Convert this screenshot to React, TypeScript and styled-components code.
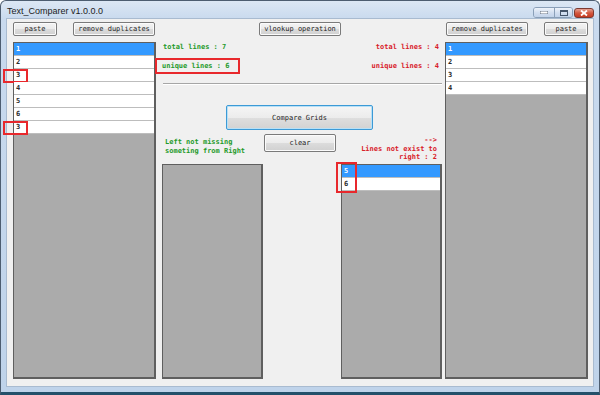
import styled, { createGlobalStyle } from "styled-components";

const GlobalStyle = createGlobalStyle`
  html, body {
    margin: 0;
    padding: 0;
    background: #ffffff;
  }
  * {
    box-sizing: border-box;
  }
`;

const Window = styled.div`
  width: 600px;
  height: 395px;
  display: flex;
  flex-direction: column;
  border: 1px solid #4d5d70;
  border-bottom: 3px solid #24506a;
  border-radius: 6px 6px 0 0;
  background: linear-gradient(to bottom, #dce7f4 0px, #c9daee 18px, #bfd3ea 100%);
  overflow: hidden;
`;

const TitleBar = styled.div`
  height: 17px;
  display: flex;
  align-items: center;
  justify-content: space-between;
  padding: 0 5px 0 6px;
`;

const Title = styled.span`
  font-family: "Liberation Sans", "Noto Sans", sans-serif;
  font-size: 9px;
  color: #1c1c1c;
  padding-top: 2px;
`;

const Caption = styled.div`
  display: flex;
  align-items: center;
  margin-top: 6px;
  height: 10px;
`;

const CaptionGroup = styled.div`
  display: flex;
  border: 1px solid #8a9fb8;
  border-radius: 3px;
  overflow: hidden;
  margin-right: 1px;
`;

const CaptionButton = styled.div<{ $w: number; $close?: boolean }>`
  width: ${(p) => p.$w}px;
  height: 9px;
  display: flex;
  align-items: center;
  justify-content: center;
  background: ${(p) =>
    p.$close
      ? "linear-gradient(to bottom, #e6a193 0%, #d3583f 50%, #c53a22 100%)"
      : "linear-gradient(to bottom, #eef3fa 0%, #d3dff0 50%, #c2d3ea 100%)"};
  & + & {
    border-left: 1px solid #8a9fb8;
  }
`;

const CloseButton = styled(CaptionButton)`
  border: 1px solid #7d3a30;
  border-radius: 3px;
  height: 10px;
`;

const Client = styled.div`
  flex: 1;
  margin: 0 5px 5px 5px;
  border: 1px solid #a9bbd0;
  background: #f0f0f0;
  padding: 3px 5px 7px 6px;
  display: grid;
  grid-template-columns: 143px 1fr 143px;
  grid-template-rows: 14px 1fr;
  row-gap: 6px;
  font-family: "DejaVu Sans Mono", "Liberation Mono", monospace;
  font-size: 7px;
`;

const ButtonBar = styled.div<{ $pad?: number }>`
  display: flex;
  gap: 16px;
  padding-left: ${(p) => p.$pad || 0}px;
`;

const Button = styled.button<{ $w: number; $h?: number }>`
  width: ${(p) => p.$w}px;
  height: ${(p) => p.$h || 14}px;
  padding: 0;
  border: 1px solid #7a7a7a;
  border-radius: 2px;
  background: linear-gradient(to bottom, #f4f4f4 0%, #ebebeb 50%, #dcdcdc 51%, #d0d0d0 100%);
  font-family: "DejaVu Sans Mono", "Liberation Mono", monospace;
  font-size: 7px;
  color: #1e1e1e;
  box-shadow: inset 0 0 0 1px #fbfbfb;
  cursor: default;
`;

const FocusButton = styled(Button)`
  border: 1px solid #3c9ad6;
  box-shadow: inset 0 0 0 1px #b8e0f6;
  background: linear-gradient(to bottom, #f5f5f5 0%, #ececec 50%, #dedede 51%, #d2d2d2 100%);
`;

const Grid = styled.div`
  background: #ababab;
  border: 1px solid #5f5f5f;
  border-right-width: 2px;
  border-bottom-width: 2px;
  display: flex;
  flex-direction: column;
  min-height: 0;
`;

const Row = styled.div<{ $selected?: boolean }>`
  position: relative;
  height: 13px;
  flex: none;
  display: flex;
  align-items: center;
  padding-left: 2px;
  font-weight: bold;
  font-size: 7px;
  background: ${(p) => (p.$selected ? "#3399ff" : "#ffffff")};
  color: ${(p) => (p.$selected ? "#ffffff" : "#2a2a2a")};
  border-bottom: 1px solid #bdbdbd;
`;

// red annotation boxes drawn over the grid rows
const RowMark = styled.span`
  position: absolute;
  left: -11px;
  top: 0;
  width: 25px;
  height: 14px;
  border: 2px solid #e8282c;
`;

const PairMark = styled.span`
  position: absolute;
  left: -6px;
  top: -3px;
  width: 21px;
  height: 31px;
  border: 2px solid #e8282c;
  z-index: 1;
`;

const RowStack = styled.div`
  position: relative;
  display: flex;
  flex-direction: column;
`;

const Center = styled.div`
  display: flex;
  flex-direction: column;
  padding: 0 3px 0 6px;
  min-height: 0;
`;

const StatRow = styled.div<{ $top: number }>`
  display: flex;
  justify-content: space-between;
  align-items: center;
  margin-top: ${(p) => p.$top}px;
  padding: 0 3px 0 1px;
  height: ${(p) => (p.$top ? 16 : 10)}px;
`;

const Stat = styled.span<{ $tone: "green" | "red" }>`
  font-weight: bold;
  font-size: 7px;
  line-height: 10px;
  color: ${(p) => (p.$tone === "green" ? "#1f9a2a" : "#d8202a")};
  white-space: pre;
`;

const BoxedStat = styled(Stat)`
  display: inline-block;
  border: 2px solid #e8282c;
  margin-left: -8px;
  padding: 1px 9px 1px 5px;
`;

const Divider = styled.div`
  height: 1px;
  margin: 9px 0 0 1px;
  background: #a6a6a6;
  box-shadow: 0 1px 0 #ffffff;
`;

const CompareWrap = styled.div`
  margin: 21px 0 0 64px;
`;

const Lower = styled.div`
  flex: 1;
  margin-top: 4px;
  display: grid;
  grid-template-columns: 101px 1fr 101px;
  grid-template-rows: 30px 1fr;
  min-height: 0;
`;

const Note = styled.div<{ $tone: "green" | "red" }>`
  font-weight: bold;
  font-size: 7px;
  line-height: ${(p) => (p.$tone === "green" ? 9 : 8.5)}px;
  color: ${(p) => (p.$tone === "green" ? "#1f9a2a" : "#d8202a")};
  text-align: ${(p) => (p.$tone === "green" ? "left" : "right")};
  padding: ${(p) => (p.$tone === "green" ? "4px 0 0 3px" : "2px 5px 0 0")};
  white-space: nowrap;
`;

const ClearWrap = styled.div`
  padding-left: 1px;
`;

const Spacer = styled.div``;

const leftLines = ["1", "2", "3", "4", "5", "6", "3"];
const rightLines = ["1", "2", "3", "4"];

const App = () => {
  return (
    <>
      <GlobalStyle />
      <Window>
        <TitleBar>
          <Title>Text_Comparer v1.0.0.0</Title>
          <Caption>
            <CaptionGroup>
              <CaptionButton $w={20}>
                <svg width="8" height="3" viewBox="0 0 8 3">
                  <rect x="0" y="0" width="8" height="3" fill="#fff" stroke="#44546a" strokeWidth="0.8" />
                </svg>
              </CaptionButton>
              <CaptionButton $w={18}>
                <svg width="8" height="6" viewBox="0 0 8 6">
                  <rect x="0.5" y="0.5" width="7" height="5" fill="none" stroke="#44546a" strokeWidth="1" />
                  <rect x="0.5" y="0.5" width="7" height="1.5" fill="#44546a" />
                </svg>
              </CaptionButton>
            </CaptionGroup>
            <CloseButton $w={20} $close>
              <svg width="8" height="6" viewBox="0 0 8 6">
                <path d="M1 0.5 L7 5.5 M7 0.5 L1 5.5" stroke="#ffffff" strokeWidth="1.8" />
              </svg>
            </CloseButton>
          </Caption>
        </TitleBar>
        <Client>
          <ButtonBar>
            <Button $w={44}>paste</Button>
            <Button $w={82}>remove duplicates</Button>
          </ButtonBar>
          <ButtonBar $pad={103}>
            <Button $w={82}>vlookup operation</Button>
          </ButtonBar>
          <ButtonBar $pad={1}>
            <Button $w={82}>remove duplicates</Button>
            <Button $w={44}>paste</Button>
          </ButtonBar>

          <Grid>
            {leftLines.map((n, i) => (
              <Row key={i} $selected={i === 0}>
                {n}
                {(i === 2 || i === 6) && <RowMark />}
              </Row>
            ))}
          </Grid>

          <Center>
            <StatRow $top={0}>
              <Stat $tone="green">total lines : 7</Stat>
              <Stat $tone="red">total lines : 4</Stat>
            </StatRow>
            <StatRow $top={6}>
              <BoxedStat $tone="green">unique lines : 6</BoxedStat>
              <Stat $tone="red">unique lines : 4</Stat>
            </StatRow>
            <Divider />
            <CompareWrap>
              <FocusButton $w={147} $h={25}>Compare Grids</FocusButton>
            </CompareWrap>
            <Lower>
              <Note $tone="green">
                Left not missing
                <br />
                someting from Right
              </Note>
              <ClearWrap>
                <Button $w={72} $h={18}>clear</Button>
              </ClearWrap>
              <Note $tone="red">
                --&gt;
                <br />
                Lines not exist to
                <br />
                right : 2
              </Note>
              <Grid />
              <Spacer />
              <Grid>
                <RowStack>
                  <PairMark />
                  <Row $selected>5</Row>
                  <Row>6</Row>
                </RowStack>
              </Grid>
            </Lower>
          </Center>

          <Grid>
            {rightLines.map((n, i) => (
              <Row key={i} $selected={i === 0}>
                {n}
              </Row>
            ))}
          </Grid>
        </Client>
      </Window>
    </>
  );
};

export default App;
